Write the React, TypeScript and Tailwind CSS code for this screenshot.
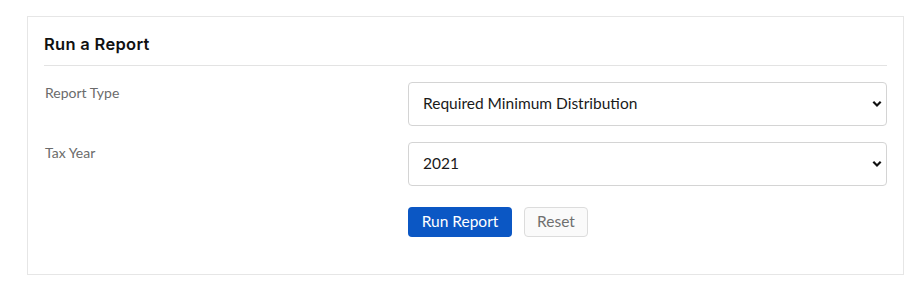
import React from "react";

function SelectBox({ value, options }: { value: string; options: string[] }) {
  return (
    <div className="relative h-[44px] w-[479px]">
      <select
        defaultValue={value}
        className="h-full w-full appearance-none rounded-[4px] border border-[#d4d4d4] bg-white pl-[14px] pr-8 text-[15.5px] text-[#1a1a1a] outline-none"
      >
        {options.map((o) => (
          <option key={o}>{o}</option>
        ))}
      </select>
      <span className="pointer-events-none absolute right-[5px] top-1/2 -translate-y-1/2">
        <svg width="10" height="7" viewBox="0 0 10 7" fill="none">
          <path d="M1.3 1.3 L5 5 L8.7 1.3" stroke="#111" strokeWidth="2.2" />
        </svg>
      </span>
    </div>
  );
}

export default function App() {
  return (
    <div
      className="min-h-[298px] w-[922px] bg-white pl-[27px] pt-[16px]"
      style={{ fontFamily: "Lato, 'Open Sans', Arial, sans-serif" }}
    >
      <div className="h-[259px] w-[877px] border border-[#e6e6e6] px-[16px]">
        <div className="h-[49px] border-b border-[#e3e3e3] pt-[15px]">
          <h2
            className="text-[16.5px] font-semibold leading-[24px] tracking-[0.3px] text-[#111]"
            style={{ fontFamily: "Inter, Lato, sans-serif" }}
          >
            Run a Report
          </h2>
        </div>
        <div className="mt-[16px] grid grid-cols-[364px_479px] gap-y-[16px]">
          <div className="pt-[1px] pl-[1px] text-[14px] leading-[20px] text-[#6b6b6b]">Report Type</div>
          <SelectBox
            value="Required Minimum Distribution"
            options={["Required Minimum Distribution", "Account Summary", "Tax Documents"]}
          />
          <div className="pt-[1px] pl-[1px] text-[14px] leading-[20px] text-[#6b6b6b]">Tax Year</div>
          <SelectBox value="2021" options={["2021", "2020", "2019"]} />
          <div />
          <div className="mt-[5px] flex gap-[12px]">
            <button className="h-[30px] w-[104px] rounded-[4px] bg-[#0b57c4] text-[15.5px] text-white">
              Run Report
            </button>
            <button className="h-[30px] w-[64px] rounded-[4px] border border-[#dcdcdc] bg-[#fafafa] text-[15.5px] text-[#6f6f6f]">
              Reset
            </button>
          </div>
        </div>
      </div>
    </div>
  );
}
